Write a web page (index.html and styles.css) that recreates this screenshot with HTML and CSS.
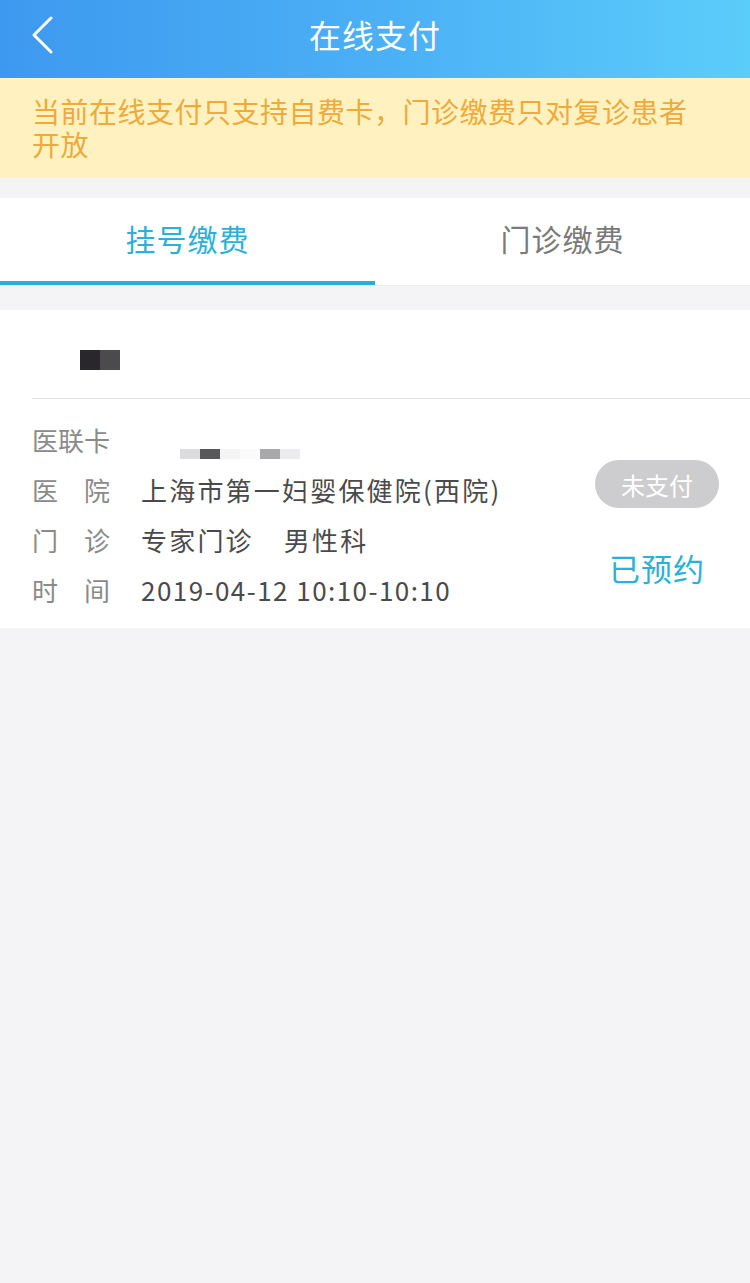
FILE: index.html
```html
<!DOCTYPE html>
<html lang="zh">
<head>
<meta charset="utf-8">
<title>在线支付</title>
<link rel="stylesheet" href="styles.css">
</head>
<body>
<div class="page">
  <header class="topbar">
    <span class="back">
      <svg width="24" height="38" viewBox="0 0 24 38"><path d="M20 2 L3 19 L20 36" fill="none" stroke="#fff" stroke-width="3" stroke-linecap="round" stroke-linejoin="round"/></svg>
    </span>
    <h1 class="title">在线支付</h1>
  </header>
  <div class="notice">当前在线支付只支持自费卡，门诊缴费只对复诊患者开放</div>
  <nav class="tabs">
    <div class="tab active">挂号缴费</div>
    <div class="tab">门诊缴费</div>
  </nav>
  <section class="card">
    <div class="name-row"><span class="mosaic m1"></span><span class="mosaic m2"></span></div>
    <div class="divider"></div>
    <div class="info">
      <div class="rows">
        <div class="row card-row">
          <span class="label">医联卡</span>
          <span class="blur">
            <i class="b b1"></i><i class="b b2"></i><i class="b b3"></i><i class="b b4"></i><i class="b b5"></i><i class="b b6"></i>
          </span>
        </div>
        <div class="row"><span class="label spread"><b>医</b><b>院</b></span><span class="value">上海市第一妇婴保健院(西院)</span></div>
        <div class="row"><span class="label spread"><b>门</b><b>诊</b></span><span class="value">专家门诊</span><span class="value dept">男性科</span></div>
        <div class="row"><span class="label spread"><b>时</b><b>间</b></span><span class="value num">2019-04-12 10:10-10:10</span></div>
      </div>
      <div class="side">
        <span class="badge">未支付</span>
        <span class="status">已预约</span>
      </div>
    </div>
  </section>
</div>
</body>
</html>
```

FILE: styles.css
```css
* { box-sizing: border-box; margin: 0; padding: 0; }
html, body { background: #f4f3f6; }
body {
  font-family: "Noto Sans CJK SC", "Noto Sans", sans-serif;
  width: 750px;
  min-height: 1283px;
}
.page { width: 750px; }

.topbar {
  height: 78px;
  background: linear-gradient(90deg, #3d99ef 0%, #4cb2f6 55%, #5bcdfa 100%);
  display: flex;
  align-items: center;
  justify-content: center;
  position: relative;
  padding-bottom: 10px;
}
.back {
  position: absolute;
  left: 31px;
  top: 16px;
  display: block;
  line-height: 0;
}
.title {
  color: #fff;
  font-size: 32px;
  font-weight: 400;
  letter-spacing: 1px;
  line-height: 40px;
}

.notice {
  background: #fff2c0;
  color: #eeaa3a;
  font-size: 28px;
  line-height: 33px;
  padding: 17px 50px 17px 32px;
  letter-spacing: 0.5px;
}

.tabs {
  margin-top: 20px;
  height: 88px;
  background: #fff;
  display: flex;
  border-bottom: 1px solid #ececee;
}
.tab {
  flex: 1;
  display: flex;
  align-items: center;
  justify-content: center;
  font-size: 30px;
  letter-spacing: 1px;
  color: #7a7a7a;
  border-bottom: 4px solid transparent;
  padding-bottom: 3px;
}
.tab.active {
  color: #2bb0d9;
  border-bottom-color: #2badd9;
}

.card {
  margin-top: 24px;
  background: #fff;
}
.name-row {
  height: 88px;
  padding: 40px 0 0 80px;
  display: flex;
}
.mosaic { width: 20px; height: 20px; display: block; }
.m1 { background: #29272b; }
.m2 { background: #4b4a4d; }
.divider {
  margin-left: 32px;
  height: 1px;
  background: #e4e4e6;
}

.info {
  display: flex;
  justify-content: space-between;
  padding: 15px 32px 14px 32px;
}
.rows { display: flex; flex-direction: column; }
.row {
  height: 50px;
  display: flex;
  align-items: center;
  font-size: 26px;
  position: relative;
}
.label {
  width: 109px;
  color: #8a8a8a;
  flex: none;
}
.spread {
  display: flex;
  justify-content: space-between;
  width: 78px;
  margin-right: 31px;
}
.spread b { font-weight: 400; }
.value { color: #4a4a4c; letter-spacing: 2.2px; }
.value.dept { margin-left: 30px; }
.value.num { letter-spacing: 1.45px; }

.blur {
  position: absolute;
  left: 148px;
  top: 35px;
  display: flex;
}
.b { display: block; height: 10px; width: 20px; }
.b1 { background: #dcdcde; }
.b2 { background: #58575a; }
.b3 { background: #f4f4f5; }
.b4 { background: #fbfbfb; }
.b5 { background: #a9a8ab; }
.b6 { background: #ececee; }

.side {
  display: flex;
  flex-direction: column;
  align-items: center;
  padding-top: 46px;
  width: 124px;
  margin-right: -1px;
}
.badge {
  width: 124px;
  height: 48px;
  border-radius: 24px;
  background: #cdcdcf;
  color: #fff;
  font-size: 24px;
  display: flex;
  align-items: center;
  justify-content: center;
}
.status {
  margin-top: 40px;
  color: #2bb0d9;
  font-size: 31px;
  line-height: 40px;
  letter-spacing: 1px;
}
```
